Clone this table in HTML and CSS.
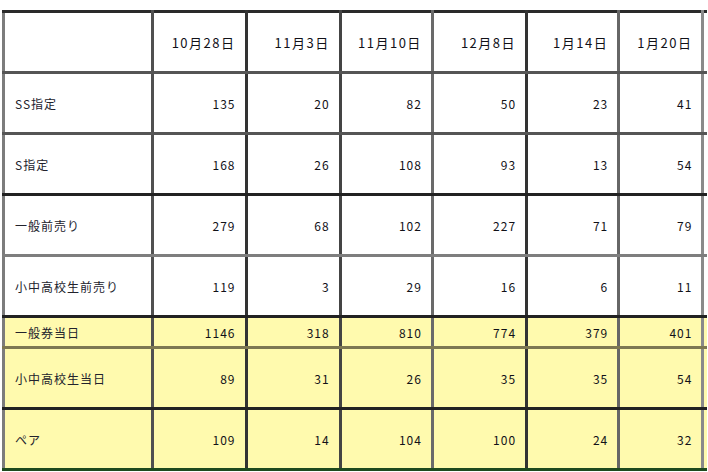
FILE: index.html
```html
<!DOCTYPE html>
<html lang="ja">
<head>
<meta charset="utf-8">
<link rel="stylesheet" href="styles.css">
</head>
<body>
<table class="sheet">
  <colgroup>
    <col class="c-label">
    <col class="c-d1">
    <col class="c-d2">
    <col class="c-d3">
    <col class="c-d4">
    <col class="c-d5">
    <col class="c-d6">
    <col class="c-d7">
  </colgroup>
  <tr class="r-head">
    <td class="lab"></td>
    <td class="hd">10月28日</td>
    <td class="hd">11月3日</td>
    <td class="hd">11月10日</td>
    <td class="hd">12月8日</td>
    <td class="hd">1月14日</td>
    <td class="hd">1月20日</td>
    <td class="edge"></td>
  </tr>
  <tr class="r-ss">
    <td class="lab">SS指定</td>
    <td class="num">135</td><td class="num">20</td><td class="num">82</td><td class="num">50</td><td class="num">23</td><td class="num">41</td><td class="edge"></td>
  </tr>
  <tr class="r-s">
    <td class="lab">S指定</td>
    <td class="num">168</td><td class="num">26</td><td class="num">108</td><td class="num">93</td><td class="num">13</td><td class="num">54</td><td class="edge"></td>
  </tr>
  <tr class="r-ip">
    <td class="lab">一般前売り</td>
    <td class="num">279</td><td class="num">68</td><td class="num">102</td><td class="num">227</td><td class="num">71</td><td class="num">79</td><td class="edge"></td>
  </tr>
  <tr class="r-sp">
    <td class="lab">小中高校生前売り</td>
    <td class="num">119</td><td class="num">3</td><td class="num">29</td><td class="num">16</td><td class="num">6</td><td class="num">11</td><td class="edge"></td>
  </tr>
  <tr class="r-it yellow">
    <td class="lab">一般券当日</td>
    <td class="num">1146</td><td class="num">318</td><td class="num">810</td><td class="num">774</td><td class="num">379</td><td class="num">401</td><td class="edge"></td>
  </tr>
  <tr class="r-st yellow">
    <td class="lab">小中高校生当日</td>
    <td class="num">89</td><td class="num">31</td><td class="num">26</td><td class="num">35</td><td class="num">35</td><td class="num">54</td><td class="edge"></td>
  </tr>
  <tr class="r-pair yellow">
    <td class="lab">ペア</td>
    <td class="num">109</td><td class="num">14</td><td class="num">104</td><td class="num">100</td><td class="num">24</td><td class="num">32</td><td class="edge"></td>
  </tr>
</table>
</body>
</html>
```

FILE: styles.css
```css
html, body {
  margin: 0;
  padding: 0;
  overflow: hidden;
  background: #ffffff;
}

body {
  width: 708px;
  height: 472px;
}

.sheet {
  margin: 10px 0 0 2px;
  border-collapse: collapse;
  table-layout: fixed;
  width: 705px;
  font-family: "Noto Sans CJK JP", "Noto Sans", sans-serif;
  font-size: 12px;
  color: #111118;
  border-top: 3px solid #2a2a2a;
  border-left: 3px solid #7c7c7c;
}

.c-label { width: 149px; border-right: 3px solid #505050; }
.c-d1 { width: 93px; border-right: 3px solid #333333; }
.c-d2 { width: 94px; border-right: 3px solid #444444; }
.c-d3 { width: 92px; border-right: 3px solid #6a6a6a; }
.c-d4 { width: 94px; border-right: 3px solid #333333; }
.c-d5 { width: 92px; border-right: 3px solid #666666; }
.c-d6 { width: 84px; border-right: 3px solid #8a8a8a; }
.c-d7 { width: 4px; }

.sheet td {
  box-sizing: border-box;
  height: 61px;
  padding: 0 9px 0 10px;
  letter-spacing: 1px;
  white-space: nowrap;
  overflow: hidden;
  vertical-align: middle;
}

.sheet td.edge {
  padding: 0;
}

.sheet td.lab {
  text-align: left;
  color: #22222c;
}

.sheet td.num {
  text-align: right;
}

.sheet td.hd {
  text-align: right;
  font-size: 13px;
  letter-spacing: 1.5px;
  padding-right: 9px;
}

.r-head { border-bottom: 3px solid #555555; }
.r-ss { border-bottom: 3px solid #555555; }
.r-s { border-bottom: 3px solid #222222; }
.r-ip { border-bottom: 3px solid #7e7e7e; }
.r-sp { border-bottom: 3px solid #222222; }
.r-it { border-bottom: 3px solid #7d7852; }
.r-it td { height: 31px; }
.r-st { border-bottom: 3px solid #222222; }
.r-pair { border-bottom: 3px solid #1e4a1e; }

.yellow td {
  background: #fffaae;
}
```
